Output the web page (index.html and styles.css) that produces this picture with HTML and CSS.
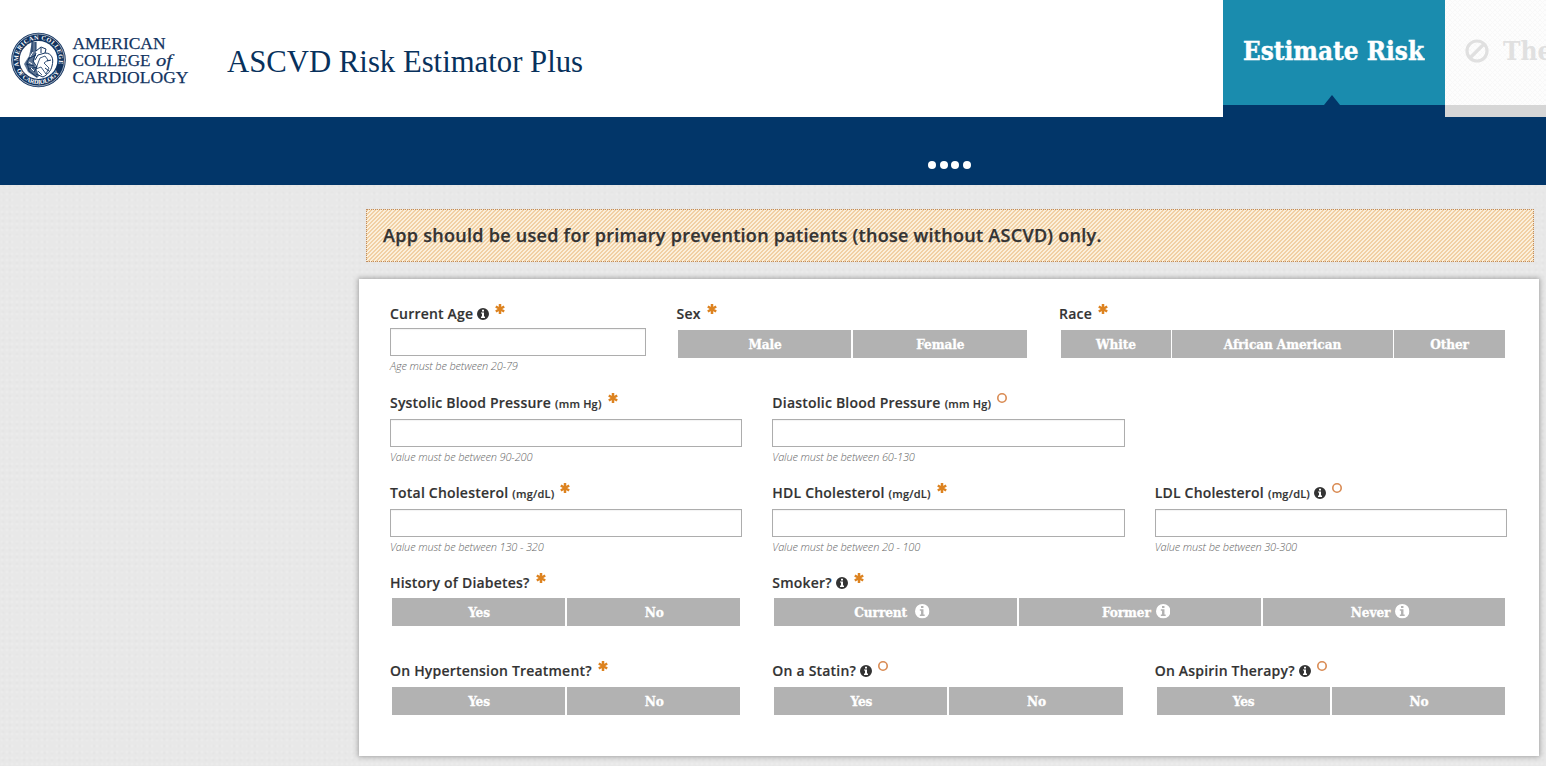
FILE: index.html
```html
<!DOCTYPE html>
<html lang="en">
<head>
<meta charset="utf-8">
<title>ASCVD Risk Estimator Plus</title>
<link rel="stylesheet" href="styles.css">
</head>
<body>
<svg class="defs" width="0" height="0" aria-hidden="true">
  <symbol id="star" viewBox="0 0 10 10"><path d="M5 0v10M.8 2.500l8.400 5M.8 7.500l8.400-5" stroke="#dd8320" stroke-width="2.500" fill="none"/></symbol>
  <symbol id="ring" viewBox="0 0 10 10"><circle cx="5" cy="5" r="4.200" stroke="#d98a52" stroke-width="1.600" fill="none"/></symbol>
  <symbol id="info" viewBox="0 0 12 12"><path fill-rule="evenodd" fill="currentColor" d="M6 0a6 6 0 1 1 0 12A6 6 0 0 1 6 0zM5 1.700v1.700h2V1.700zM4 4.400v1.200h1v3H4v1.300h4V8.600H7V4.400z"/></symbol>
</svg>
<header class="header">
  <svg class="logo" width="182" height="64" viewBox="0 0 182 64" fill="#12335f">
    <circle cx="30.500" cy="32" r="27.300"/>
    <circle cx="30.500" cy="32" r="26" fill="none" stroke="#fff" stroke-width=".6"/>
    <circle cx="30.500" cy="32" r="18.900" fill="#fff"/>
    <path id="arcTop" d="M11 38a20.400 20.400 0 1 1 39 0" fill="none"/>
    <path id="arcBottom" d="M8.500 42a24.200 24.200 0 0 0 44 0" fill="none"/>
    <text class="seal"><textPath href="#arcTop" textLength="74">AMERICAN COLLEGE</textPath></text>
    <text class="seal"><textPath href="#arcBottom" textLength="52">OF CARDIOLOGY</textPath></text>
    <path d="M24 14h4v10l-2 10 5 14-2 2-9-6-4-8 5-8z" fill="#5d7392"/>
    <path d="M24 14v12l-5 8 2 9 8 6M28 14v9l5-4 5 2-1 4c7 0 9 6 7 13-1 5-5 9-9 11l-7-3M28 25l-3 8 4 6-3 5M37 25l-7 2-3 5M20 31l8-4M18 36l8 2M21 41l8-2M33 20v5M43 32l-4 1M41 43l-4-3" fill="none" stroke="#12335f" stroke-width="1"/>
    <path d="M32 30l5-2 3 4-4 3 5 5-3 6-5-7-5 2 2-6 2-5M30 43l4 4" fill="none" stroke="#12335f" stroke-width=".8"/>
    <path d="M22 29l3-5M21 34l3 2M23 40l3 3" fill="none" stroke="#fff" stroke-width="1"/>
    <g class="logo-text">
      <text x="64.500" y="21" textLength="93" lengthAdjust="spacingAndGlyphs">AMERICAN</text>
      <text x="64.500" y="38" textLength="78" lengthAdjust="spacingAndGlyphs">COLLEGE</text>
      <text x="148" y="38" font-style="italic" textLength="16" lengthAdjust="spacingAndGlyphs">of</text>
      <text x="64.500" y="54.500" textLength="116" lengthAdjust="spacingAndGlyphs">CARDIOLOGY</text>
    </g>
  </svg>
  <svg class="title" width="360" height="44" viewBox="0 0 360 44"><text x="1" y="31" textLength="356" lengthAdjust="spacingAndGlyphs">ASCVD Risk Estimator Plus</text></svg>
  <nav class="tabs">
    <div class="tab tab-active">
      <svg width="182" height="36" viewBox="0 0 182 36"><text x="0" y="27" textLength="181" lengthAdjust="spacingAndGlyphs">Estimate Risk</text></svg>
      <i class="pointer"></i>
    </div>
    <div class="tab tab-disabled">
      <svg class="ban" width="24" height="24" viewBox="0 0 24 24"><path d="M5.500 18.500l13-13M12 2a10 10 0 1 1 0 20 10 10 0 0 1 0-20z" fill="none" stroke="currentColor" stroke-width="3.200"/></svg>
      <span>Therapy</span>
    </div>
  </nav>
</header>
<div class="band"><i></i><i></i><i></i><i></i></div>
<main class="main">
  <div class="notice">App should be used for primary prevention patients (those without ASCVD) only.</div>
  <form class="card">
    <div class="row row-first">
      <div class="field"><label>Current Age<svg class="info"><use href="#info"/></svg><svg class="mark"><use href="#star"/></svg></label><input class="box"><p>Age must be between 20-79</p></div>
      <div class="field"><label>Sex<svg class="mark"><use href="#star"/></svg></label><div class="group"><span>Male</span><span>Female</span></div></div>
      <div class="field"><label>Race<svg class="mark"><use href="#star"/></svg></label><div class="group group-race"><span>White</span><span>African American</span><span>Other</span></div></div>
    </div>
    <div class="row">
      <div class="field"><label>Systolic Blood Pressure<small>(mm Hg)</small><svg class="mark"><use href="#star"/></svg></label><input class="box"><p>Value must be between 90-200</p></div>
      <div class="field"><label>Diastolic Blood Pressure<small>(mm Hg)</small><svg class="mark"><use href="#ring"/></svg></label><input class="box"><p>Value must be between 60-130</p></div>
    </div>
    <div class="row">
      <div class="field"><label>Total Cholesterol<small>(mg/dL)</small><svg class="mark"><use href="#star"/></svg></label><input class="box"><p>Value must be between 130 - 320</p></div>
      <div class="field"><label>HDL Cholesterol<small>(mg/dL)</small><svg class="mark"><use href="#star"/></svg></label><input class="box"><p>Value must be between 20 - 100</p></div>
      <div class="field"><label>LDL Cholesterol<small>(mg/dL)</small><svg class="info"><use href="#info"/></svg><svg class="mark"><use href="#ring"/></svg></label><input class="box"><p>Value must be between 30-300</p></div>
    </div>
    <div class="row row-history">
      <div class="field"><label>History of Diabetes?<svg class="mark"><use href="#star"/></svg></label><div class="group"><span>Yes</span><span>No</span></div></div>
      <div class="field wide"><label>Smoker?<svg class="info"><use href="#info"/></svg><svg class="mark"><use href="#star"/></svg></label><div class="group"><span class="spaced">Current<svg><use href="#info"/></svg></span><span class="with-info">Former<svg><use href="#info"/></svg></span><span class="with-info">Never<svg><use href="#info"/></svg></span></div></div>
    </div>
    <div class="row">
      <div class="field"><label>On Hypertension Treatment?<svg class="mark"><use href="#star"/></svg></label><div class="group"><span>Yes</span><span>No</span></div></div>
      <div class="field"><label>On a Statin?<svg class="info"><use href="#info"/></svg><svg class="mark"><use href="#ring"/></svg></label><div class="group"><span>Yes</span><span>No</span></div></div>
      <div class="field"><label>On Aspirin Therapy?<svg class="info"><use href="#info"/></svg><svg class="mark"><use href="#ring"/></svg></label><div class="group"><span>Yes</span><span>No</span></div></div>
    </div>
  </form>
</main>
</body>
</html>
```
FILE: styles.css
```css
* { box-sizing: border-box; }
html, body { margin: 0; height: 766px; overflow: hidden; }
body {
  background-color: #e8e8e8;
  background-image:
    radial-gradient(circle at 2px 2px, rgba(255,255,255,.12) 0 1px, transparent 2px),
    radial-gradient(circle at 3px 4px, rgba(0,0,0,.01) 0 1px, transparent 2px);
  background-size: 5px 6px, 7px 7px;
  font-family: "Open Sans", sans-serif;
  color: #333;
}
.defs { position: absolute; }
.header { display: flex; height: 117px; background: #fff; }
.logo { flex: none; margin: 28px 0 0 8px; }
.seal { font: bold 6.300px "Liberation Serif", serif; fill: #fff; }
.logo-text { font: 17px "Liberation Serif", serif; stroke: #12335f; stroke-width: .25px; }
.title { flex: none; overflow: visible; margin: 41px 0 0 36px; font: 32px "Liberation Serif", serif; fill: #08315c; }
.tabs { flex: none; display: flex; width: 323px; margin-left: auto; overflow: hidden; }
.tab { flex: none; display: flex; height: 117px; padding: 33px 20px 0; font: bold 26px "DejaVu Serif Condensed", "DejaVu Serif", serif; }
.tab-active { position: relative; width: 222px; background: #1a8cae; border-bottom: 12px solid #023669; fill: #fff; stroke: #fff; stroke-width: .4px; }
.pointer { position: absolute; left: 101px; bottom: 0; border: 8px solid transparent; border-top: 0; border-bottom: 10px solid #023669; }
.tab-disabled {
  width: 260px;
  color: #e0e0e0;
  border-bottom: 12px solid #d6d6d6;
  background: linear-gradient(45deg, #f8f8f8 12%, transparent 12% 44%, #f8f8f8 44% 56%, transparent 56% 88%, #f8f8f8 88%) 0 0 / 5px 5px, linear-gradient(-45deg, #f8f8f8 12%, #fdfdfd 12% 44%, #f8f8f8 44% 56%, #fdfdfd 56% 88%, #f8f8f8 88%) 0 0 / 5px 5px;
}
.tab-disabled span { margin-left: 14px; line-height: 37px; }
.ban { margin: 6px 0 0; }
.band { display: flex; gap: 3.500px; height: 68px; padding: 44px 0 0 928px; background: #023669; }
.band i { width: 8px; height: 8px; border-radius: 50%; background: #fff; }
.main { padding: 24px 7px 0 359px; }
.notice {
  height: 53px;
  width: 1168px;
  margin: 0 0 17px 7px;
  padding-left: 16px;
  border: 1px dotted #bd8c62;
  background: linear-gradient(135deg, #f1d0a4 12.500%, #fbf0dc 12.500% 37.500%, #f1d0a4 37.500% 62.500%, #fbf0dc 62.500% 87.500%, #f1d0a4 87.500%) 0 0 / 4px 4px;
  font-size: 18px;
  font-weight: 600;
  letter-spacing: .285px;
  line-height: 51px;
  -webkit-text-stroke: .25px #333;
}
.card { width: 1180px; height: 477px; padding: 25px 32px 0 31px; background: #fff; box-shadow: 0 0 5px 1px rgba(0,0,0,.3); }
.row { display: grid; grid-template-columns: repeat(3, 352.330px); column-gap: 30px; height: 90px; }
.row-first { grid-template-columns: 256px 352.500px 447.500px; height: 89px; }
.row-history { height: 88px; }
.wide { grid-column: span 2; }
.field label { display: flex; align-items: center; height: 18px; margin-bottom: 8px; font-size: 14px; font-weight: 600; letter-spacing: .2px; white-space: nowrap; -webkit-text-stroke: .15px #333; }
.row-first label { margin-bottom: 6px; }
.row-first .field + .field label { padding-left: .6px; }
.row-history label { margin-bottom: 7px; }
.field small { margin: 2px 0 0 4px; font-size: 11px; }
.info { width: 12px; height: 12px; margin: 1px 0 0 4px; }
.mark { width: 10px; height: 10px; margin: -8px 0 0 6px; }
.box { display: block; width: 100%; height: 28px; padding: 0; border: 1px solid #adadad; background: #fff; box-shadow: inset 0 1px 1px rgba(0,0,0,.05); }
.field p { margin: 2px 0 0; font-size: 11px; font-style: italic; font-weight: 300; letter-spacing: -.15px; line-height: 16px; color: #666; }
.group { display: grid; grid-auto-flow: column; grid-auto-columns: 1fr; gap: 2px; height: 28px; margin: 0 2px; }
.row-first .group { margin-top: 8px; }
.group-race { grid-template-columns: 110px 221px 111px; gap: 1px; }
.group span { display: flex; align-items: center; justify-content: center; padding: 0 0 1px 1px; background: #b2b2b2; color: #fff; font: bold 13.500px "DejaVu Serif Condensed", "DejaVu Serif", serif; letter-spacing: -.1px; white-space: nowrap; -webkit-text-stroke: .3px #fff; }
.group svg { width: 14.500px; height: 14.500px; margin-left: 5px; }
.group .with-info { padding-right: 8px; }
.group .spaced { padding-right: 8px; }
.group .spaced svg { margin-left: 8px; }
```
